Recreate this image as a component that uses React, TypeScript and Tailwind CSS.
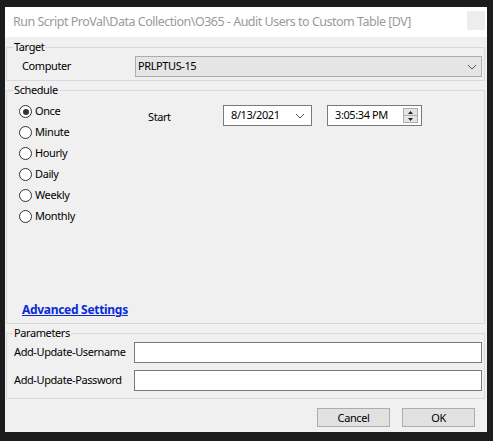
import React from 'react'

const font = { fontFamily: '"Noto Sans", "Open Sans", sans-serif' }

const txt = 'text-[11px] tracking-[-0.4px] text-black'

function Chevron() {
  return (
    <svg width="10" height="6" viewBox="0 0 10 6" className="shrink-0">
      <path d="M1 1 L5 5 L9 1" fill="none" stroke="#505050" strokeWidth="1" />
    </svg>
  )
}

function Radio({ label, checked }: { label: string; checked?: boolean }) {
  return (
    <div className="flex items-center h-[21px]">
      <span className="w-[13px] h-[13px] rounded-full border border-[#333] bg-white flex items-center justify-center">
        {checked && <span className="w-[6px] h-[6px] rounded-full bg-[#333]" />}
      </span>
      <span className={`ml-[3px] ${txt}`}>{label}</span>
    </div>
  )
}

function Group({
  title,
  className,
  children,
}: {
  title: string
  className?: string
  children: React.ReactNode
}) {
  return (
    <fieldset className={`border border-[#d9d9d9] mx-[1px] mr-[2px] ${className ?? ''}`}>
      <legend className={`ml-[6px] px-[1px] leading-[16px] ${txt}`}>{title}</legend>
      {children}
    </fieldset>
  )
}

export default function App() {
  const schedules = ['Once', 'Minute', 'Hourly', 'Daily', 'Weekly', 'Monthly']

  return (
    <div className="w-[493px] h-[441px] bg-[#1c1c1c] overflow-hidden" style={font}>
      <div className="ml-[5px] pt-[7px]">
        <div className="w-[482px] h-[425px] bg-[#f0f0f0] flex flex-col">
          {/* Title bar */}
          <div className="h-[30px] bg-white flex items-center pl-[8px] shrink-0">
            <span className="text-[12.5px] tracking-[-0.5px] text-[#9a9a9a] whitespace-nowrap flex-1">
              Run Script ProVal\Data Collection\O365 - Audit Users to Custom Table [DV]
            </span>
            <span className="w-[18px] h-[19px] bg-[#ededed] mt-[4px] self-start mr-[2px]" />
          </div>

          {/* Target */}
          <Group title="Target" className="mt-[2px] h-[42px]">
            <div className="flex items-center pt-[1px]">
              <span className={`w-[128px] pl-[15px] ${txt}`}>Computer</span>
              <div className="flex-1 mr-[2px] h-[21px] bg-[#e5e5e5] border border-[#adadad] flex items-center pl-[2px] pr-[4px]">
                <span className={`flex-1 ${txt}`}>PRLPTUS-15</span>
                <Chevron />
              </div>
            </div>
          </Group>

          {/* Schedule */}
          <Group title="Schedule" className="mt-[1px] h-[242px]">
            <div className="h-[225px] flex flex-col">
              <div className="flex">
                <div className="pl-[12px] pt-[3px] w-[141px]">
                  {schedules.map((s, i) => (
                    <Radio key={s} label={s} checked={i === 0} />
                  ))}
                </div>
                <div className="flex items-start pt-[7px]">
                  <span className={`w-[75px] mt-[4px] ${txt}`}>Start</span>
                  <div className="w-[89px] h-[21px] bg-white border border-[#7a7a7a] flex items-center pl-[7px] pr-[6px]">
                    <span className={`flex-1 ${txt}`}>8/13/2021</span>
                    <Chevron />
                  </div>
                  <div className="ml-[15px] w-[95px] h-[21px] bg-white border border-[#7a7a7a] flex items-center pl-[7px] pr-[3px]">
                    <span className={`flex-1 ${txt}`}>3:05:34 PM</span>
                    <div className="w-[15px] h-[15px] flex flex-col border border-[#adadad] bg-[#e5e5e5]">
                      <div className="flex-1 flex items-center justify-center border-b border-[#adadad]">
                        <svg width="5" height="3" viewBox="0 0 5 3"><path d="M0 3 L2.5 0 L5 3 Z" fill="#222" /></svg>
                      </div>
                      <div className="flex-1 flex items-center justify-center">
                        <svg width="5" height="3" viewBox="0 0 5 3"><path d="M0 0 L2.5 3 L5 0 Z" fill="#222" /></svg>
                      </div>
                    </div>
                  </div>
                </div>
              </div>
              <div className="flex-1" />
              <a className="ml-[15px] mb-[4px] text-[12px] tracking-[-0.3px] font-bold text-[#0a2ad6] underline self-start cursor-pointer">
                Advanced Settings
              </a>
            </div>
          </Group>

          {/* Parameters */}
          <Group title="Parameters" className="mt-[1px] h-[74px]">
            <div className="flex flex-col gap-[7px] pt-[1px]">
              <div className="flex items-center">
                <span className={`w-[127px] pl-[7px] whitespace-nowrap ${txt}`}>Add-Update-Username</span>
                <div className="flex-1 mr-[2px] h-[21px] bg-white border border-[#7a7a7a]" />
              </div>
              <div className="flex items-center">
                <span className={`w-[127px] pl-[7px] whitespace-nowrap ${txt}`}>Add-Update-Password</span>
                <div className="flex-1 mr-[2px] h-[21px] bg-white border border-[#7a7a7a]" />
              </div>
            </div>
          </Group>

          {/* Buttons */}
          <div className="flex justify-end gap-[12px] pt-[9px] pr-[12px]">
            <button className={`w-[73px] h-[19px] bg-[#e1e1e1] border border-[#adadad] leading-none ${txt}`}>
              Cancel
            </button>
            <button className={`w-[73px] h-[19px] bg-[#e1e1e1] border border-[#adadad] leading-none ${txt}`}>
              OK
            </button>
          </div>
        </div>
      </div>
    </div>
  )
}
